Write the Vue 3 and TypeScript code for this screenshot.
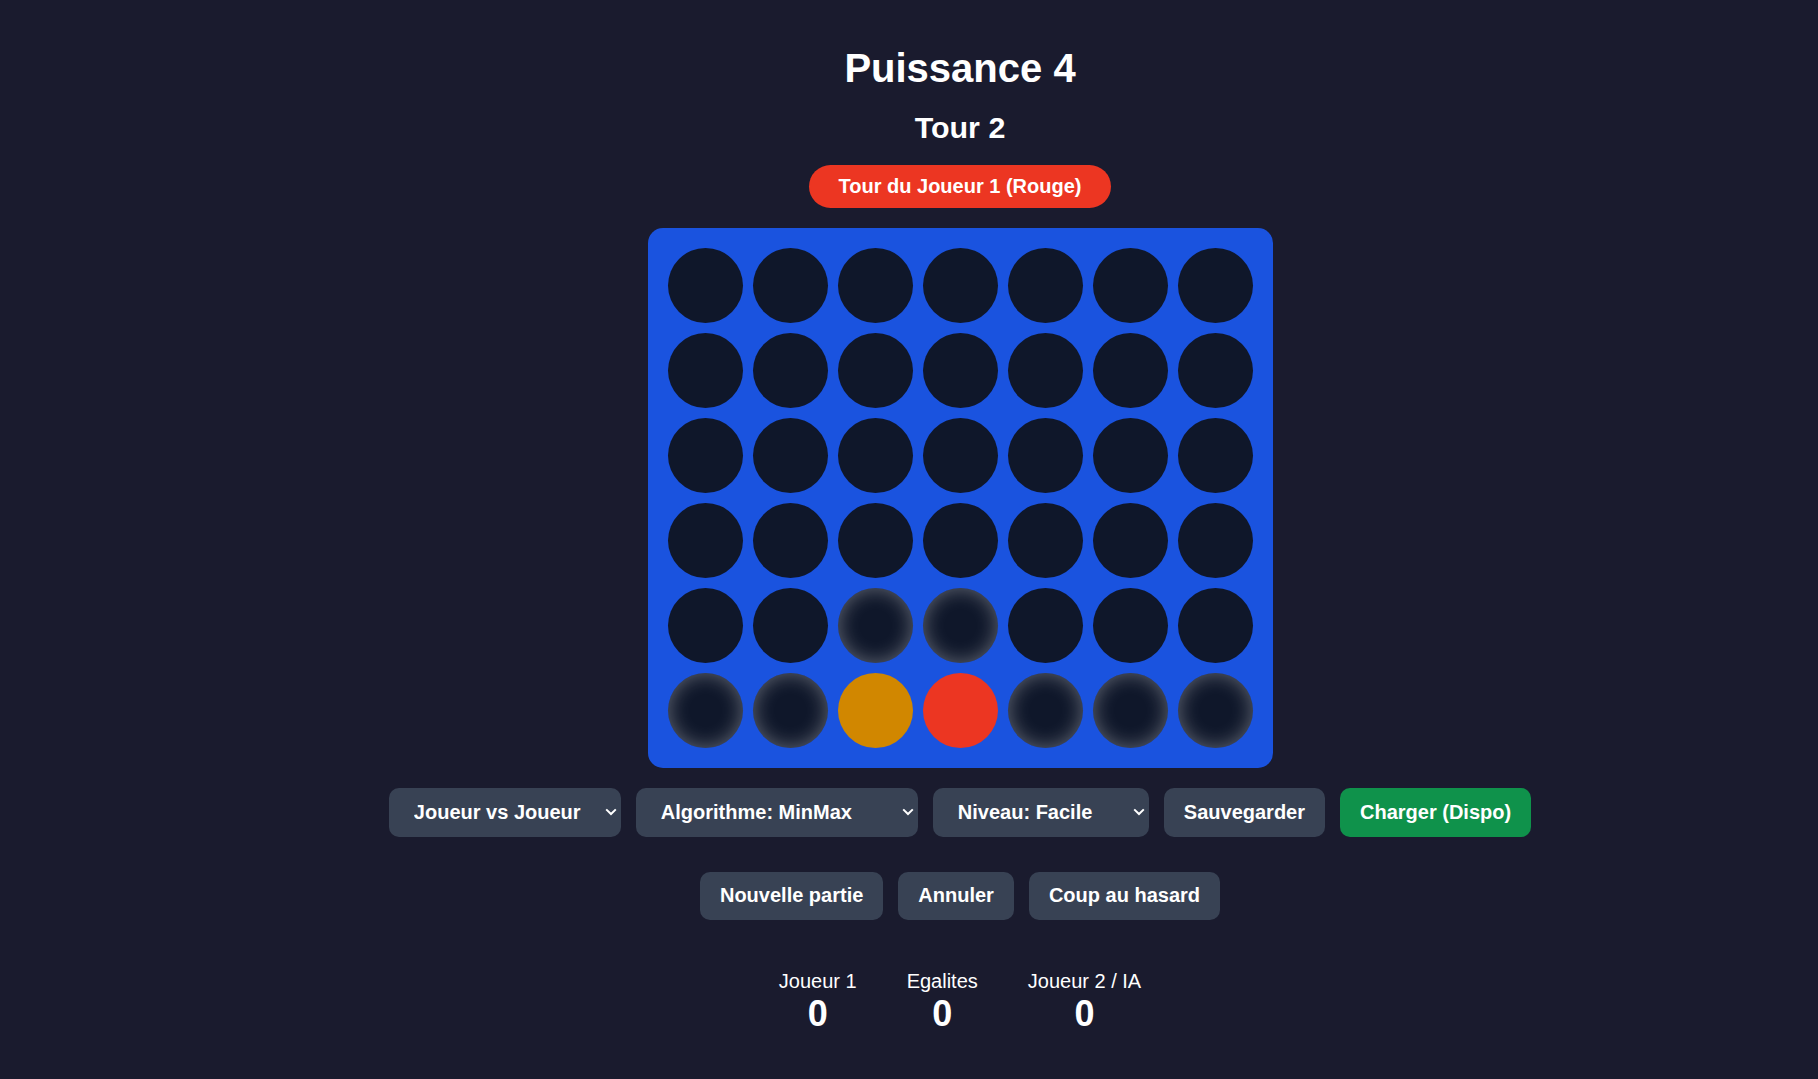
<script setup lang="ts">
import { ref } from 'vue'

type Cell = 0 | 1 | 2

const tour = ref(2)
const scores = [
  { label: 'Joueur 1', value: 0 },
  { label: 'Egalites', value: 0 },
  { label: 'Joueur 2 / IA', value: 0 }
]

const board = ref<Cell[][]>([
  [0, 0, 0, 0, 0, 0, 0],
  [0, 0, 0, 0, 0, 0, 0],
  [0, 0, 0, 0, 0, 0, 0],
  [0, 0, 0, 0, 0, 0, 0],
  [0, 0, 0, 0, 0, 0, 0],
  [0, 0, 2, 1, 0, 0, 0]
])

// une case est jouable si elle est vide et que celle du dessous est pleine
function isPlayable(row: number, col: number) {
  if (board.value[row][col] !== 0) return false
  return row === board.value.length - 1 || board.value[row + 1][col] !== 0
}
</script>

<template>
  <div class="page">
    <h1 class="title">Puissance 4</h1>
    <h2 class="round">Tour {{ tour }}</h2>
    <div class="turn">Tour du Joueur 1 (Rouge)</div>

    <div class="board">
      <template v-for="(line, r) in board" :key="r">
        <div
          v-for="(cell, c) in line"
          :key="c"
          class="cell"
          :class="{ red: cell === 1, yellow: cell === 2, playable: isPlayable(r, c) }"
        ></div>
      </template>
    </div>

    <div class="controls">
      <select class="ctl sel sel-mode">
        <option>Joueur vs Joueur</option>
        <option>Joueur vs IA</option>
      </select>
      <select class="ctl sel sel-algo">
        <option>Algorithme: MinMax</option>
        <option>Algorithme: Alpha-Beta</option>
      </select>
      <select class="ctl sel sel-level">
        <option>Niveau: Facile</option>
        <option>Niveau: Moyen</option>
        <option>Niveau: Difficile</option>
      </select>
      <button class="ctl">Sauvegarder</button>
      <button class="ctl green">Charger (Dispo)</button>
    </div>

    <div class="actions">
      <button class="ctl">Nouvelle partie</button>
      <button class="ctl">Annuler</button>
      <button class="ctl">Coup au hasard</button>
    </div>

    <div class="scores">
      <div v-for="s in scores" :key="s.label" class="score">
        <div class="score-label">{{ s.label }}</div>
        <div class="score-value">{{ s.value }}</div>
      </div>
    </div>
  </div>
</template>

<style>
html,
body {
  margin: 0;
  background: #1a1b2e;
}
</style>

<style scoped>
.page {
  box-sizing: border-box;
  min-height: 1079px;
  padding: 46px 0 0 102px;
  display: flex;
  flex-direction: column;
  align-items: center;
  background: #1a1b2e;
  color: #fff;
  font-family: "Liberation Sans", Arial, sans-serif;
}

.title {
  margin: 0;
  font-size: 40px;
  font-weight: 700;
}

.round {
  margin: 19px 0 0;
  font-size: 30.4px;
  font-weight: 700;
}

.turn {
  margin-top: 20px;
  padding: 10px 30px;
  border-radius: 22px;
  background: #ec3622;
  font-size: 20px;
  font-weight: 700;
}

.board {
  margin-top: 20px;
  padding: 20px;
  display: grid;
  grid-template-columns: repeat(7, 75px);
  grid-auto-rows: 75px;
  gap: 10px;
  border-radius: 15px;
  background: #1a53df;
}

.cell {
  border-radius: 50%;
  background: #0f172a;
}

.cell.playable {
  box-shadow: inset 0 0 20px rgba(255, 255, 255, 0.35);
}

.cell.red {
  background: #ec3622;
}

.cell.yellow {
  background: #d18700;
}

.controls,
.actions {
  display: flex;
  justify-content: center;
  gap: 15px;
}

.controls {
  margin-top: 20px;
}

.actions {
  margin-top: 35px;
}

.ctl {
  padding: 12.8px 20px;
  border: none;
  border-radius: 10px;
  background: #384254;
  color: #fff;
  font-family: inherit;
  font-size: 20px;
  font-weight: 700;
}

.green {
  background: #0f924b;
}

.sel {
  appearance: none;
  padding-left: 25px;
  background-image: url("data:image/svg+xml,%3Csvg xmlns='http://www.w3.org/2000/svg' width='12' height='8'%3E%3Cpath d='M1.2 1.4 6 6 10.8 1.4' fill='none' stroke='%23fff' stroke-width='2'/%3E%3C/svg%3E");
  background-repeat: no-repeat;
  background-position: right 4px center;
}

.sel-mode {
  width: 232px;
}

.sel-algo {
  width: 282px;
}

.sel-level {
  width: 216px;
}

.scores {
  margin-top: 50px;
  display: flex;
  gap: 50px;
  text-align: center;
}

.score-label {
  font-size: 20px;
}

.score-value {
  font-size: 36px;
  font-weight: 700;
}
</style>
